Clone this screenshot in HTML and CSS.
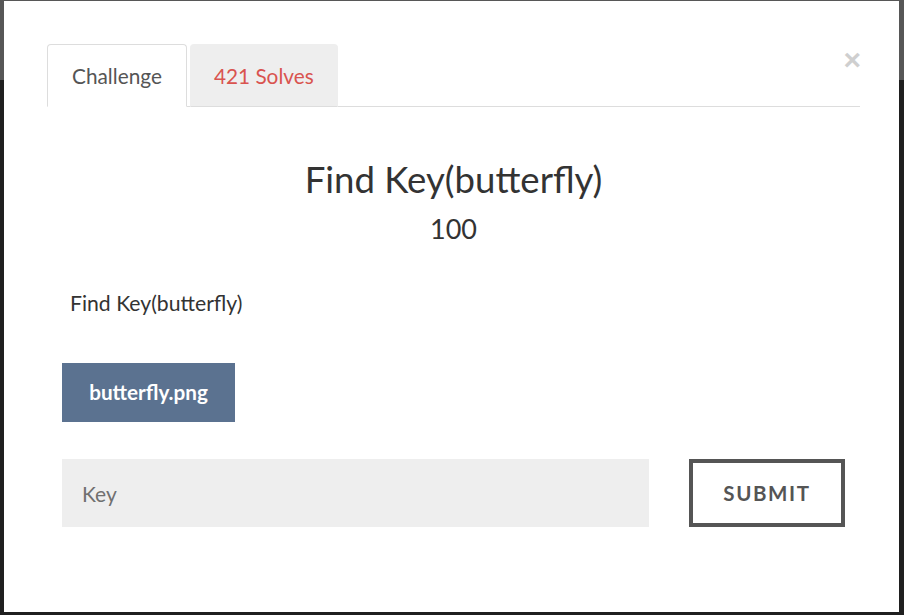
FILE: index.html
```html
<!DOCTYPE html>
<html>
<head>
<meta charset="utf-8">
<link rel="stylesheet" href="styles.css">
</head>
<body>
<div class="modal">
  <button class="close" aria-label="Close">&times;</button>
  <ul class="tabs">
    <li class="tab active">Challenge</li>
    <li class="tab solves">421 Solves</li>
  </ul>
  <div class="body">
    <h3 class="title">Find Key(butterfly)</h3>
    <div class="value">100</div>
    <p class="desc">Find Key(butterfly)</p>
    <div class="files"><a class="file" href="#">butterfly.png</a></div>
    <div class="answer">
      <input class="key" type="text" placeholder="Key">
      <button class="submit">SUBMIT</button>
    </div>
  </div>
</div>
</body>
</html>
```
FILE: styles.css
```css
html, body {
  margin: 0;
  padding: 0;
  height: 615px;
  overflow: hidden;
}
body {
  background: linear-gradient(to bottom, #575757 0, #575757 80px, #1f1f1f 80px);
  font-family: Lato, "Open Sans", sans-serif;
  padding-top: 1px;
  box-sizing: border-box;
}
.modal {
  position: relative;
  margin: 0 5px 0 4px;
  height: 611px;
  background: #fff;
  padding: 43px 39px 0 43px;
  box-sizing: border-box;
}
.close {
  position: absolute;
  top: 44px;
  right: 38px;
  border: 0;
  background: none;
  font-family: "Liberation Sans", Arial, sans-serif;
  font-size: 30px;
  line-height: 30px;
  font-weight: bold;
  color: #cfcfcf;
  padding: 0;
  cursor: pointer;
}
.tabs {
  list-style: none;
  margin: 0;
  padding: 0;
  display: flex;
  gap: 3px;
  border-bottom: 1px solid #ddd;
}
.tab {
  font-size: 20.8px;
  line-height: 27px;
  padding: 17px 24px;
  border: 1px solid transparent;
  border-radius: 4px 4px 0 0;
  margin-bottom: -1px;
}
.tab.active {
  color: #555;
  background: #fff;
  border-color: #ddd #ddd #fff #ddd;
}
.tab.solves {
  color: #d9534f;
  background: #eee;
  border-color: #eee #eee #ddd #eee;
  padding: 17px 23px;
}
.body {
  padding: 0 15px 0 15px;
}
.title {
  margin: 50px 0 0;
  text-align: center;
  font-size: 36.6px;
  font-weight: 400;
  line-height: 44px;
  color: #333;
}
.value {
  text-align: center;
  font-size: 27px;
  line-height: 34px;
  color: #333;
  margin-top: 11px;
}
.desc {
  margin: 44px 0 0 8px;
  font-size: 21.2px;
  line-height: 27px;
  color: #333;
}
.files {
  margin-top: 46px;
  display: flex;
}
.file {
  display: block;
  width: 173px;
  height: 59px;
  line-height: 59px;
  text-align: center;
  background: #5b7290;
  color: #fff;
  font-weight: 700;
  font-size: 20.7px;
  text-decoration: none;
}
.answer {
  margin-top: 37px;
  display: flex;
  justify-content: space-between;
}
.key {
  width: 587px;
  height: 68px;
  box-sizing: border-box;
  border: 0;
  background: #eee;
  padding: 0 20px;
  font-family: Lato, sans-serif;
  font-size: 21px;
  color: #333;
  outline: none;
}
.key::placeholder {
  color: #707070;
}
.submit {
  width: 156px;
  height: 68px;
  box-sizing: border-box;
  border: 4px solid #555;
  background: #fff;
  color: #555;
  font-family: Lato, sans-serif;
  font-weight: 700;
  font-size: 20.5px;
  letter-spacing: 1.6px;
  padding: 0;
}
```
